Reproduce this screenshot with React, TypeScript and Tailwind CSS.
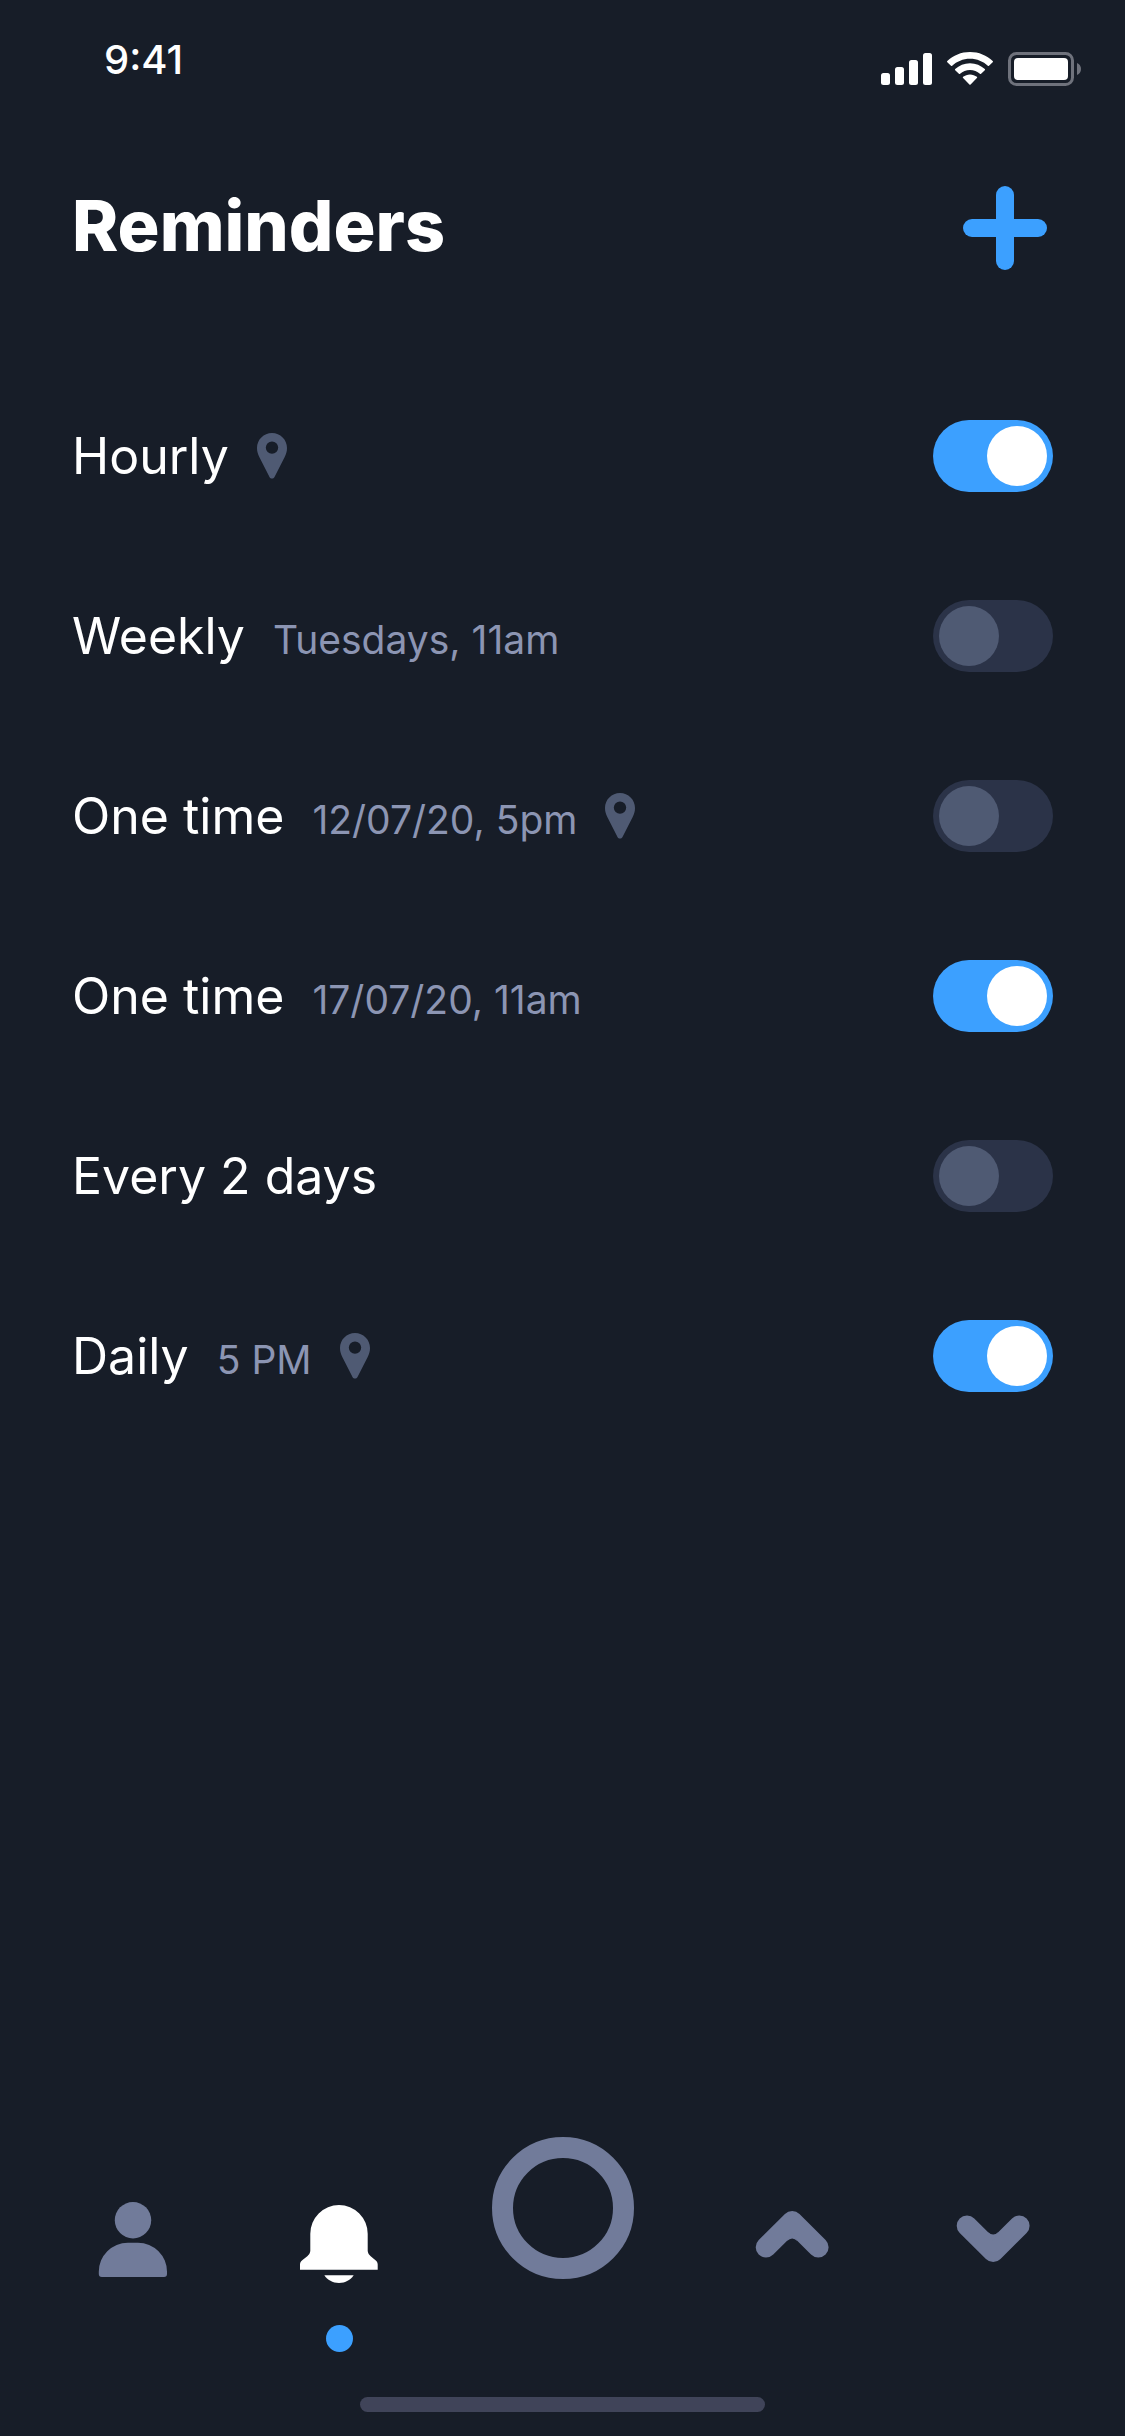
import { useState } from "react";

const REMINDERS = [
  { id: "hourly", title: "Hourly", detail: "", pin: true, on: true },
  { id: "weekly", title: "Weekly", detail: "Tuesdays, 11am", pin: false, on: false },
  { id: "once-12", title: "One time", detail: "12/07/20, 5pm", pin: true, on: false },
  { id: "once-17", title: "One time", detail: "17/07/20, 11am", pin: false, on: true },
  { id: "every-2", title: "Every 2 days", detail: "", pin: false, on: false },
  { id: "daily", title: "Daily", detail: "5 PM", pin: true, on: true },
];

function StatusBar() {
  return (
    <div className="flex h-[132px] items-start justify-between pl-[104px] pr-[43px]">
      <span className="mt-[30px] text-[40px] font-medium leading-[60px]">9:41</span>
      <div className="mt-[52px] flex gap-[15px]">
        <svg width="51" height="34" viewBox="0 0 51 34" fill="currentColor" aria-hidden="true">
          <rect x="0" y="21" width="9" height="12" rx="2.5" />
          <rect x="14" y="15" width="9" height="18" rx="2.5" />
          <rect x="28" y="8" width="9" height="25" rx="2.5" />
          <rect x="42" y="1" width="9" height="32" rx="2.5" />
        </svg>
        <svg width="46" height="34" viewBox="0 0 46 34" fill="currentColor" aria-hidden="true">
          <path d="M23 0C14.2 0 6.2 3.4 0.3 9q-.6.6 0 1.200L4 13.800q.6.5 1.200 0C9.800 9.500 16 6.800 23 6.800s13.200 2.700 17.800 7q.6.5 1.200 0l3.700-3.600q.6-.6 0-1.200C39.800 3.400 31.800 0 23 0Z" />
          <path d="M23 11.200c-5.700 0-10.900 2.200-14.800 5.800q-.6.6 0 1.200l3.700 3.600q.6.6 1.200 0c2.600-2.400 6.100-3.800 9.900-3.800s7.300 1.400 9.900 3.800q.6.6 1.200 0l3.700-3.600q.6-.6 0-1.200C33.900 13.400 28.700 11.200 23 11.200Z" />
          <path d="M23 22.400c-2.600 0-5 .9-6.900 2.400q-.7.6 0 1.300l6.300 6.400q.6.6 1.200 0l6.300-6.400q.7-.7 0-1.300C28 23.300 25.600 22.400 23 22.400Z" />
        </svg>
        <svg width="74" height="34" viewBox="0 0 74 34" fill="none" aria-hidden="true">
          <rect x="1.500" y="1.500" width="63" height="31" rx="7" stroke="#6f727c" strokeWidth="3" />
          <rect x="6" y="6" width="54" height="22" rx="4" fill="#fff" />
          <path d="M69 11c2.500 1 4 3.300 4 6s-1.500 5-4 6Z" fill="#6f727c" />
        </svg>
      </div>
    </div>
  );
}

function Pin() {
  return (
    <svg width="30" height="46" viewBox="0 0 30 46" fill="#4f5a73" aria-label="Location">
      <path
        fillRule="evenodd"
        d="M15 0C6.700 0 0 6.700 0 15c0 3.300.8 6 2.300 9l10.200 19.900c1.100 2.100 3.900 2.100 5 0L27.700 24C29.200 21 30 18.300 30 15 30 6.700 23.300 0 15 0Zm0 8.400a6.200 6.200 0 1 1 0 12.400 6.200 6.200 0 0 1 0-12.400Z"
      />
    </svg>
  );
}

function NavIcon({ name }: { name: string }) {
  return (
    <svg width="84" height="84" viewBox="0 0 84 84" fill="currentColor" aria-hidden="true">
      {name === "profile" && (
        <>
          <circle cx="42" cy="18.200" r="18.200" />
          <path d="M7.800 72V69.700a29 29 0 0 1 29-29H47a29 29 0 0 1 29 29V72q0 3-3 3H10.800q-3 0-3-3Z" />
        </>
      )}
      {name === "reminders" && (
        <>
          <path d="M42 3a28.700 28.700 0 0 1 28.700 28.700V49c.3 2.300 1.300 3.800 3 5.200l4.500 3.700c1.700 1.500 2.500 2.600 2.500 4.600v5.300H3v-5.300c0-2 .8-3.100 2.500-4.600l4.800-3.700c1.700-1.400 2.700-2.900 3-5.200V31.700A28.700 28.700 0 0 1 42 3Z" />
          <path d="M27.300 73.300H56.700C53.500 78 48.500 81 42 81s-11.500-3-14.700-7.700Z" />
        </>
      )}
      {name === "up" && (
        <>
          <path d="M16 45.300 42.200 19.200 68.300 45.300" fill="none" stroke="currentColor" strokeWidth="20.600" strokeLinecap="round" strokeLinejoin="round" />
          <path d="M37 39 42.200 30 47.400 39Q42.200 33.800 37 39Z" />
        </>
      )}
      {name === "down" && (
        <>
          <path d="M16 23.700 42.200 49.800 68.300 23.700" fill="none" stroke="currentColor" strokeWidth="20.600" strokeLinecap="round" strokeLinejoin="round" />
          <path d="M37 30 42.200 39 47.400 30Q42.200 35.200 37 30Z" />
        </>
      )}
    </svg>
  );
}

const NAV = [
  { name: "profile", label: "Profile" },
  { name: "reminders", label: "Reminders", current: true },
  { name: "record", label: "Record" },
  { name: "up", label: "Move up" },
  { name: "down", label: "Move down" },
];

export default function App() {
  const [items, setItems] = useState(REMINDERS);

  const toggle = (id: string) =>
    setItems(items.map((r) => (r.id === id ? { ...r, on: !r.on } : r)));

  return (
    <div className="flex min-h-screen flex-col bg-[#171d28] font-['Inter',sans-serif] text-white">
      <StatusBar />

      <header className="flex h-48 items-center justify-between pl-[72px] pr-[78px]">
        <h1 className="pb-1 text-[70px] font-extrabold leading-[84px]">Reminders</h1>
        <button type="button" aria-label="Add reminder" className="text-[#3ca0ff]">
          <svg width="84" height="84" viewBox="0 0 84 84" fill="currentColor" aria-hidden="true">
            <rect x="33" y="0" width="18" height="84" rx="9" />
            <rect x="0" y="33" width="84" height="18" rx="9" />
          </svg>
        </button>
      </header>

      <main className="mt-[42px] px-[72px]">
        <ul>
          {items.map((r) => (
            <li key={r.id} className="flex h-[180px] items-center justify-between">
              <label htmlFor={r.id} className="flex items-center gap-7">
                <span className="flex items-baseline gap-7">
                  <span className="text-[50px] leading-[72px]">{r.title}</span>
                  {r.detail && <span className="text-[39px] leading-[40px] text-[#8c95b3]">{r.detail}</span>}
                </span>
                {r.pin && <Pin />}
              </label>
              <input
                id={r.id}
                type="checkbox"
                role="switch"
                checked={r.on}
                onChange={() => toggle(r.id)}
                className="h-[72px] w-[120px] appearance-none rounded-full bg-[#2b3348] p-1.5 before:block before:size-[60px] before:rounded-full before:bg-[#4f5a73] checked:bg-[#3ca0ff] checked:before:translate-x-12 checked:before:bg-white"
              />
            </li>
          ))}
        </ul>
      </main>

      <nav className="mt-auto grid grid-cols-[206fr_206fr_241fr_218fr_184fr] items-end pl-[30px] pr-10 text-[#717b9a]">
        {NAV.map((n) => (
          <button
            key={n.name}
            type="button"
            aria-label={n.label}
            className={`flex flex-col items-center ${n.current ? "text-white" : ""}`}
          >
            {n.name === "record" ? (
              <span className="mb-[7px] size-[142px] rounded-full border-[21px] border-current" />
            ) : (
              <NavIcon name={n.name} />
            )}
            <span className={`mt-[39px] size-[27px] rounded-full ${n.current ? "bg-[#3ca0ff]" : ""}`} />
          </button>
        ))}
      </nav>

      <div className="mx-auto mb-6 mt-[45px] h-[15px] w-[36%] rounded-full bg-[#404459]" />
    </div>
  );
}
